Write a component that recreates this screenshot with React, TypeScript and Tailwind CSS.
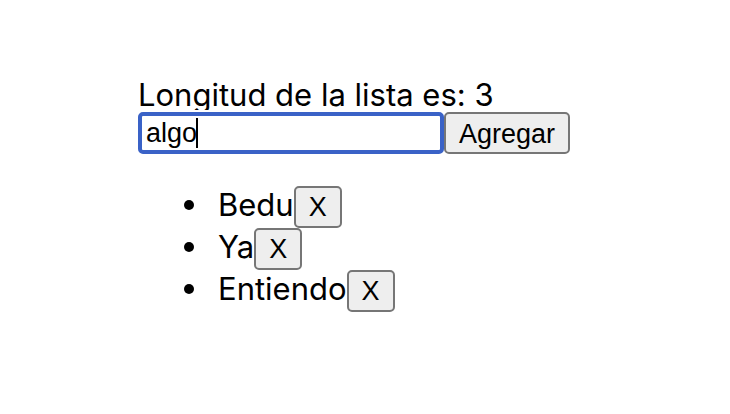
import { useState } from "react";
import type { FormEvent } from "react";

export default function App() {
  const [items, setItems] = useState(["Bedu", "Ya", "Entiendo"]);
  const [text, setText] = useState("algo");

  const add = (event: FormEvent) => {
    event.preventDefault();
    if (!text) return;
    setItems([...items, text]);
    setText("");
  };

  return (
    <main className="min-h-screen bg-white px-[138px] pt-[78px] font-[Inter,sans-serif] text-[31px] text-black">
      <p className="h-8 whitespace-nowrap leading-[34px]">Longitud de la lista es: {items.length}</p>
      <form
        onSubmit={add}
        className="relative flex border-t-2 border-white font-['Liberation_Sans',sans-serif] text-[27px]"
      >
        <div className="relative">
          <input
            aria-label="Nuevo elemento"
            value={text}
            onChange={(event) => setText(event.target.value)}
            className="peer block h-[42px] w-[306px] rounded-[5px] border-4 border-[#3a62c7] bg-white px-1 outline-none"
          />
          {/* Resting caret, replaced by the browser's own once the field has focus */}
          {text === "algo" && (
            <span
              aria-hidden="true"
              className="pointer-events-none absolute left-[58px] top-1.5 h-[30px] w-0.5 bg-black peer-focus:hidden"
            />
          )}
        </div>
        <button type="submit" className="h-[42px] rounded-[5px] border-2 border-[#767676] bg-[#eeeeee] px-[13px]">
          Agregar
        </button>
      </form>
      <ul className="mt-8 pl-[46px]">
        {items.map((item, index) => (
          <li
            key={index}
            className="flex h-[42px] leading-[38px] before:mr-6 before:mt-3.5 before:size-2.5 before:rounded-full before:bg-black before:content-['']"
          >
            {item}
            <button
              type="button"
              aria-label={`X, quitar ${item}`}
              onClick={() => setItems(items.filter((_, other) => other !== index))}
              className="h-[42px] rounded-[5px] border-2 border-[#767676] bg-[#eeeeee] px-[13px] font-['Liberation_Sans',sans-serif] text-[27px]"
            >
              X
            </button>
          </li>
        ))}
      </ul>
    </main>
  );
}
